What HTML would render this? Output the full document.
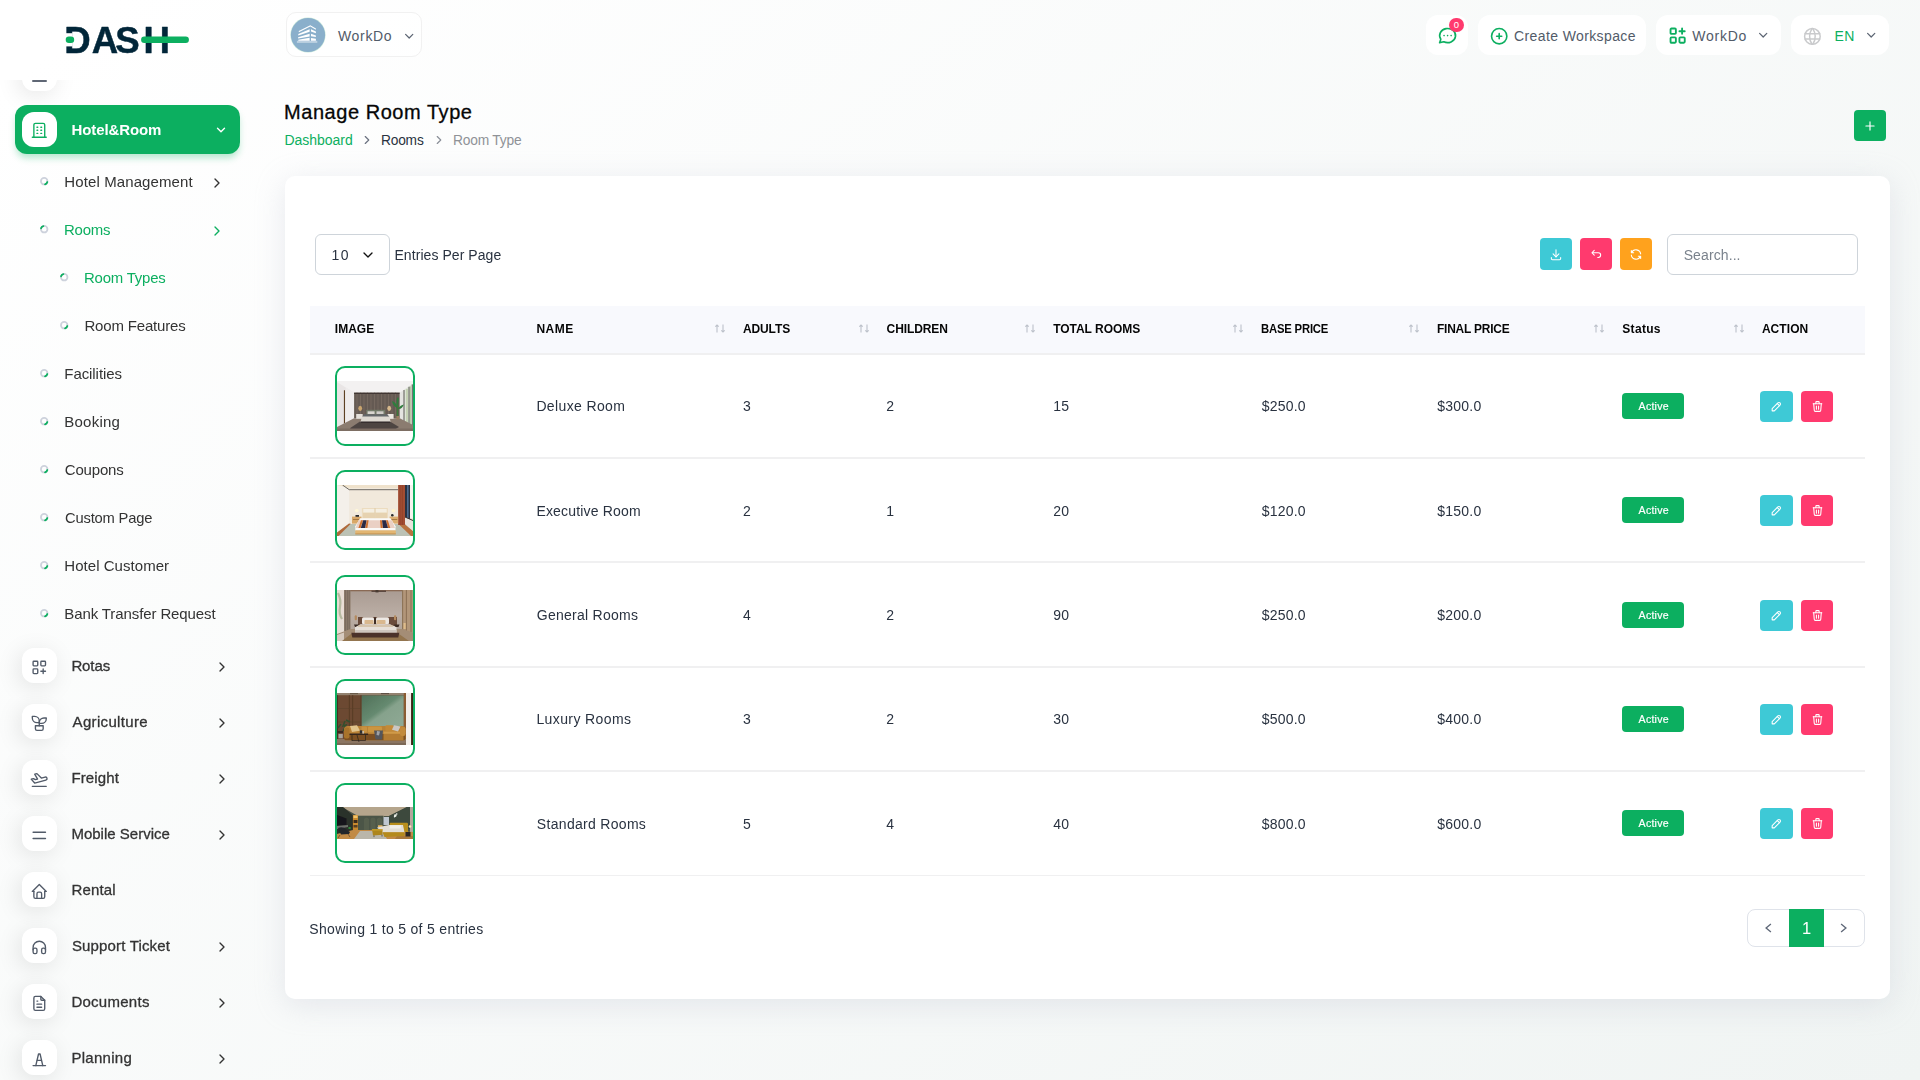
<!DOCTYPE html>
<html lang="en">
<head>
<meta charset="utf-8">
<title>Manage Room Type</title>
<style>
*{box-sizing:border-box;margin:0;padding:0}
html,body{width:1920px;height:1080px;overflow:hidden}
body{font-family:"Liberation Sans",sans-serif;font-size:14px;color:#293240;
background:linear-gradient(141.55deg,rgba(240,244,243,0) 3.46%,#f0f4f3 99.86%),#fff;position:relative}
.t{position:absolute;white-space:nowrap;display:block}
.abs{position:absolute}
a{text-decoration:none;color:inherit}
ul{list-style:none}
.micon{position:absolute;left:22px;width:35px;height:35px;border-radius:12px;background:#fff;
box-shadow:-3px 4px 23px rgba(0,0,0,.1);display:flex;align-items:center;justify-content:center;color:#525b69}
.med{-webkit-text-stroke:.3px currentColor}
.med2{-webkit-text-stroke:.18px currentColor}
.hbox{position:absolute;top:14.9px;height:40.4px;background:#fff;border-radius:12px}
.btn{position:absolute;border-radius:4px;display:flex;align-items:center;justify-content:center;color:#fff}
.card{position:absolute;left:285px;top:176px;width:1605px;height:822.5px;background:#fff;border-radius:10px;
box-shadow:0 6px 30px rgba(182,186,203,.3)}
.bullet{position:absolute;width:8.4px;height:8.4px;border-radius:50%;border:1.6px solid #c5cbd6}
</style>
</head>
<body>

<nav class="abs" style="left:0;top:0;width:280px;height:1080px;will-change:transform">
<a class="abs" style="left:60px;top:20px;width:136px;height:40px"><svg width="136" height="40" viewBox="60 20 136 40" style="position:absolute;left:0;top:0"><text y="52.9" x="64.300 91.700 115.300 143.600" font-family="Liberation Sans, sans-serif" font-weight="700" font-size="36.600" fill="#012639" stroke="#012639" stroke-width=".5" stroke-linejoin="round">DASH</text><rect x="63" y="33.200" width="9.600" height="13.200" fill="#fff"/><rect x="65.700" y="36.600" width="8.500" height="6.400" rx="3.200" fill="#0caf60"/><rect x="141.100" y="36.600" width="47.800" height="6.400" rx="3.200" fill="#0caf60"/></svg></a>
<div class="abs" style="left:0;top:80px;width:280px;height:60px;overflow:hidden"><div class="micon" style="top:-24.1px"></div><div class="abs" style="left:32px;top:0.4px;width:15px;height:1.5px;background:#5f6775;border-radius:1px"></div></div>
<ul>
<li><div class="abs" style="left:15px;top:105px;width:225px;height:49px;border-radius:12px;background:#0caf60;box-shadow:0 5px 7px -1px rgba(12,175,96,.3)"></div>
<span class="micon" style="top:112px;color:#0caf60;box-shadow:none"><svg width="18.6" height="18.6" viewBox="0 0 24 24" fill="none" stroke="currentColor" stroke-width="1.75" stroke-linecap="round" stroke-linejoin="round" style="transform:translateY(1px)"><path d="M3 21h18"/><path d="M5 21V5a2 2 0 0 1 2-2h10a2 2 0 0 1 2 2v16"/><path d="M9 8h1M9 12h1M9 16h1M14 8h1M14 12h1M14 16h1"/></svg></span>
<span class="t" style="left:71.62px;top:121px;font-size:15px;line-height:17px;color:#fff;letter-spacing:-0.128px;font-weight:700;">Hotel&amp;Room</span>
<svg width="14" height="14" viewBox="0 0 24 24" fill="none" stroke="#fff" stroke-width="2.4" stroke-linecap="round" stroke-linejoin="round" style="position:absolute;left:213.5px;top:122.5px;"><path d="M6 9l6 6 6-6"/></svg>
</li>
<li><svg class="abs" style="left:38.8px;top:175.8px" width="10.4" height="10.400" viewBox="-5.200 -5.200 10.400 10.400" fill="none" stroke-width="1.800"><circle r="3.250" stroke="#cdd2dc"/><circle r="3.250" stroke="#0caf60" stroke-dasharray="3.300 30" stroke-linecap="round" transform="rotate(15)"/></svg>
<span class="t" style="left:64.30px;top:173px;font-size:15px;line-height:17px;color:#333333;letter-spacing:0.108px;">Hotel Management</span>
<svg width="16" height="16" viewBox="0 0 24 24" fill="none" stroke="#333333" stroke-width="2" stroke-linecap="round" stroke-linejoin="round" style="position:absolute;left:209.0px;top:174.8px;"><path d="M9 18l6-6-6-6"/></svg>
</li>
<li><svg class="abs" style="left:38.8px;top:223.8px" width="10.4" height="10.400" viewBox="-5.200 -5.200 10.400 10.400" fill="none" stroke-width="1.800"><circle r="3.250" stroke="#cdd2dc"/><circle r="3.250" stroke="#0caf60" stroke-dasharray="3.300 30" stroke-linecap="round" transform="rotate(195)"/></svg>
<span class="t" style="left:64.30px;top:221px;font-size:15px;line-height:17px;color:#0caf60;letter-spacing:-0.200px;transform:scaleX(0.9972);transform-origin:0 0;">Rooms</span>
<svg width="16" height="16" viewBox="0 0 24 24" fill="none" stroke="#0caf60" stroke-width="2" stroke-linecap="round" stroke-linejoin="round" style="position:absolute;left:209.0px;top:222.8px;"><path d="M9 18l6-6-6-6"/></svg>
</li>
<li><svg class="abs" style="left:58.8px;top:271.8px" width="10.4" height="10.400" viewBox="-5.200 -5.200 10.400 10.400" fill="none" stroke-width="1.800"><circle r="3.250" stroke="#cdd2dc"/><circle r="3.250" stroke="#0caf60" stroke-dasharray="3.300 30" stroke-linecap="round" transform="rotate(195)"/></svg>
<span class="t" style="left:84.41px;top:269px;font-size:15px;line-height:17px;color:#0caf60;letter-spacing:-0.200px;transform:scaleX(0.9950);transform-origin:0 0;">Room Types</span>
</li>
<li><svg class="abs" style="left:58.8px;top:319.8px" width="10.4" height="10.400" viewBox="-5.200 -5.200 10.400 10.400" fill="none" stroke-width="1.800"><circle r="3.250" stroke="#cdd2dc"/><circle r="3.250" stroke="#0caf60" stroke-dasharray="3.300 30" stroke-linecap="round" transform="rotate(15)"/></svg>
<span class="t" style="left:84.40px;top:317px;font-size:15px;line-height:17px;color:#333333;letter-spacing:-0.169px;">Room Features</span>
</li>
<li><svg class="abs" style="left:38.8px;top:367.8px" width="10.4" height="10.400" viewBox="-5.200 -5.200 10.400 10.400" fill="none" stroke-width="1.800"><circle r="3.250" stroke="#cdd2dc"/><circle r="3.250" stroke="#0caf60" stroke-dasharray="3.300 30" stroke-linecap="round" transform="rotate(15)"/></svg>
<span class="t" style="left:64.30px;top:365px;font-size:15px;line-height:17px;color:#333333;letter-spacing:-0.069px;">Facilities</span>
</li>
<li><svg class="abs" style="left:38.8px;top:415.8px" width="10.4" height="10.400" viewBox="-5.200 -5.200 10.400 10.400" fill="none" stroke-width="1.800"><circle r="3.250" stroke="#cdd2dc"/><circle r="3.250" stroke="#0caf60" stroke-dasharray="3.300 30" stroke-linecap="round" transform="rotate(15)"/></svg>
<span class="t" style="left:64.30px;top:413px;font-size:15px;line-height:17px;color:#333333;letter-spacing:0.229px;">Booking</span>
</li>
<li><svg class="abs" style="left:38.8px;top:463.8px" width="10.4" height="10.400" viewBox="-5.200 -5.200 10.400 10.400" fill="none" stroke-width="1.800"><circle r="3.250" stroke="#cdd2dc"/><circle r="3.250" stroke="#0caf60" stroke-dasharray="3.300 30" stroke-linecap="round" transform="rotate(15)"/></svg>
<span class="t" style="left:64.75px;top:461px;font-size:15px;line-height:17px;color:#333333;letter-spacing:-0.167px;">Coupons</span>
</li>
<li><svg class="abs" style="left:38.8px;top:511.8px" width="10.4" height="10.400" viewBox="-5.200 -5.200 10.400 10.400" fill="none" stroke-width="1.800"><circle r="3.250" stroke="#cdd2dc"/><circle r="3.250" stroke="#0caf60" stroke-dasharray="3.300 30" stroke-linecap="round" transform="rotate(15)"/></svg>
<span class="t" style="left:64.76px;top:509px;font-size:15px;line-height:17px;color:#333333;letter-spacing:-0.200px;transform:scaleX(0.9834);transform-origin:0 0;">Custom Page</span>
</li>
<li><svg class="abs" style="left:38.8px;top:559.8px" width="10.4" height="10.400" viewBox="-5.200 -5.200 10.400 10.400" fill="none" stroke-width="1.800"><circle r="3.250" stroke="#cdd2dc"/><circle r="3.250" stroke="#0caf60" stroke-dasharray="3.300 30" stroke-linecap="round" transform="rotate(15)"/></svg>
<span class="t" style="left:64.30px;top:557px;font-size:15px;line-height:17px;color:#333333;letter-spacing:0.044px;">Hotel Customer</span>
</li>
<li><svg class="abs" style="left:38.8px;top:607.8px" width="10.4" height="10.400" viewBox="-5.200 -5.200 10.400 10.400" fill="none" stroke-width="1.800"><circle r="3.250" stroke="#cdd2dc"/><circle r="3.250" stroke="#0caf60" stroke-dasharray="3.300 30" stroke-linecap="round" transform="rotate(15)"/></svg>
<span class="t" style="left:64.30px;top:605px;font-size:15px;line-height:17px;color:#333333;letter-spacing:-0.104px;">Bank Transfer Request</span>
</li>
<li><span class="micon" style="top:648.3px"><svg width="18.6" height="18.6" viewBox="0 0 24 24" fill="none" stroke="currentColor" stroke-width="1.75" stroke-linecap="round" stroke-linejoin="round" style="transform:translateY(1.1px)"><rect x="4" y="4" width="6" height="6" rx="1"/><rect x="14" y="4" width="6" height="6" rx="1"/><rect x="4" y="14" width="6" height="6" rx="1"/><path d="M14 17h6m-3-3v6"/></svg></span>
<span class="t med" style="left:71.40px;top:657px;font-size:15px;line-height:17px;color:#333333;letter-spacing:-0.106px;">Rotas</span>
<svg width="16" height="16" viewBox="0 0 24 24" fill="none" stroke="#333333" stroke-width="2" stroke-linecap="round" stroke-linejoin="round" style="position:absolute;left:213.5px;top:659.0px;"><path d="M9 18l6-6-6-6"/></svg>
</li>
<li><span class="micon" style="top:704.3px"><svg width="18.6" height="18.6" viewBox="0 0 24 24" fill="none" stroke="currentColor" stroke-width="1.75" stroke-linecap="round" stroke-linejoin="round" style="transform:translateY(1.1px)"><path d="M7 15h10v4a2 2 0 0 1-2 2H9a2 2 0 0 1-2-2v-4z"/><path d="M12 9a6 6 0 0 0-6-6H3v2a6 6 0 0 0 6 6h3"/><path d="M12 11a6 6 0 0 1 6-6h3v1a6 6 0 0 1-6 6h-3"/><path d="M12 15V9"/></svg></span>
<span class="t med" style="left:72.60px;top:713px;font-size:15px;line-height:17px;color:#333333;letter-spacing:0.330px;">Agriculture</span>
<svg width="16" height="16" viewBox="0 0 24 24" fill="none" stroke="#333333" stroke-width="2" stroke-linecap="round" stroke-linejoin="round" style="position:absolute;left:213.5px;top:715.0px;"><path d="M9 18l6-6-6-6"/></svg>
</li>
<li><span class="micon" style="top:760.3px"><svg width="18.6" height="18.6" viewBox="0 0 24 24" fill="none" stroke="currentColor" stroke-width="1.75" stroke-linecap="round" stroke-linejoin="round" style="transform:translateY(1.1px)"><path d="M15 12h5a2 2 0 0 1 0 4H5l-3-6h3l2 2h3L8 5h3z" transform="rotate(-15 12 12) translate(0 -1)"/><path d="M3 21h18"/></svg></span>
<span class="t med" style="left:71.40px;top:769px;font-size:15px;line-height:17px;color:#333333;letter-spacing:0.158px;">Freight</span>
<svg width="16" height="16" viewBox="0 0 24 24" fill="none" stroke="#333333" stroke-width="2" stroke-linecap="round" stroke-linejoin="round" style="position:absolute;left:213.5px;top:771.0px;"><path d="M9 18l6-6-6-6"/></svg>
</li>
<li><span class="micon" style="top:816.3px"><svg width="18.6" height="18.6" viewBox="0 0 24 24" fill="none" stroke="currentColor" stroke-width="1.75" stroke-linecap="round" stroke-linejoin="round" style="transform:translateY(1.1px)"><path d="M4 8h16M4 16h16"/></svg></span>
<span class="t med" style="left:71.40px;top:825px;font-size:15px;line-height:17px;color:#333333;letter-spacing:0.013px;">Mobile Service</span>
<svg width="16" height="16" viewBox="0 0 24 24" fill="none" stroke="#333333" stroke-width="2" stroke-linecap="round" stroke-linejoin="round" style="position:absolute;left:213.5px;top:827.0px;"><path d="M9 18l6-6-6-6"/></svg>
</li>
<li><span class="micon" style="top:872.3px"><svg width="18.6" height="18.6" viewBox="0 0 24 24" fill="none" stroke="currentColor" stroke-width="1.75" stroke-linecap="round" stroke-linejoin="round" style="transform:translateY(1.1px)"><path d="M5 12H3l9-9 9 9h-2"/><path d="M5 12v7a2 2 0 0 0 2 2h10a2 2 0 0 0 2-2v-7"/><path d="M9 21v-6a2 2 0 0 1 2-2h2a2 2 0 0 1 2 2v6"/></svg></span>
<span class="t med" style="left:71.40px;top:881px;font-size:15px;line-height:17px;color:#333333;letter-spacing:0.190px;">Rental</span>
</li>
<li><span class="micon" style="top:928.3px"><svg width="18.6" height="18.6" viewBox="0 0 24 24" fill="none" stroke="currentColor" stroke-width="1.75" stroke-linecap="round" stroke-linejoin="round" style="transform:translateY(1.1px)"><rect x="4" y="13" rx="2" width="5" height="7"/><rect x="15" y="13" rx="2" width="5" height="7"/><path d="M4 15v-3a8 8 0 0 1 16 0v3"/></svg></span>
<span class="t med" style="left:71.92px;top:937px;font-size:15px;line-height:17px;color:#333333;letter-spacing:0.163px;">Support Ticket</span>
<svg width="16" height="16" viewBox="0 0 24 24" fill="none" stroke="#333333" stroke-width="2" stroke-linecap="round" stroke-linejoin="round" style="position:absolute;left:213.5px;top:939.0px;"><path d="M9 18l6-6-6-6"/></svg>
</li>
<li><span class="micon" style="top:984.3px"><svg width="18.6" height="18.6" viewBox="0 0 24 24" fill="none" stroke="currentColor" stroke-width="1.75" stroke-linecap="round" stroke-linejoin="round" style="transform:translateY(1.1px)"><path d="M14 3v4a1 1 0 0 0 1 1h4"/><path d="M17 21H7a2 2 0 0 1-2-2V5a2 2 0 0 1 2-2h7l5 5v11a2 2 0 0 1-2 2z"/><path d="M9 9h1M9 13h6M9 17h6"/></svg></span>
<span class="t med" style="left:71.40px;top:993px;font-size:15px;line-height:17px;color:#333333;letter-spacing:0.266px;">Documents</span>
<svg width="16" height="16" viewBox="0 0 24 24" fill="none" stroke="#333333" stroke-width="2" stroke-linecap="round" stroke-linejoin="round" style="position:absolute;left:213.5px;top:995.0px;"><path d="M9 18l6-6-6-6"/></svg>
</li>
<li><span class="micon" style="top:1040.3px"><svg width="18.6" height="18.6" viewBox="0 0 24 24" fill="none" stroke="currentColor" stroke-width="1.75" stroke-linecap="round" stroke-linejoin="round" style="transform:translateY(1.1px)"><path d="M4 20h16"/><path d="M9.300 13.200h5.400"/><path d="M7.500 20L11 5h2l3.500 15"/></svg></span>
<span class="t med" style="left:71.40px;top:1049px;font-size:15px;line-height:17px;color:#333333;letter-spacing:0.279px;">Planning</span>
<svg width="16" height="16" viewBox="0 0 24 24" fill="none" stroke="#333333" stroke-width="2" stroke-linecap="round" stroke-linejoin="round" style="position:absolute;left:213.5px;top:1051.0px;"><path d="M9 18l6-6-6-6"/></svg>
</li>
</ul></nav>
<header>
<div class="abs" style="left:285.5px;top:12.3px;width:136px;height:45.2px;border:1px solid #f1f1f1;border-radius:10px;background:rgba(255,255,255,.6)"></div>
<svg class="abs" style="left:290px;top:17px" width="36" height="36" viewBox="-0.900 -0.900 36 36"><circle cx="17.100" cy="17.100" r="17.600" fill="#cbeadb"/><circle cx="17.100" cy="17.100" r="17.100" fill="#8aafcb"/><g fill="#fff"><path d="M7.900 13.200L19.400 7.400 25 10.600V11.800L19.400 8.700 7.900 14.400z"/><path d="M7.400 16L18.750 11.300V13.900L7.400 17.500z"/><path d="M7.200 19.300L18.750 15.900V18.600L7.200 20.600z"/><path d="M7.400 21.800L18.750 19.900V22.900H7.400z"/><path d="M20.100 11.300L25 13.700V15.400L20.100 13.500z"/><path d="M20.100 15.900L25 17.500V19.200L20.100 18.300z"/><path d="M20.100 20L25 20.800V22.900H20.100z"/><rect x="6" y="22.900" width="20.400" height="2.100" opacity=".42"/></g></svg>
<span class="t" style="left:338.00px;top:28px;font-size:14px;line-height:16px;color:#525b69;letter-spacing:0.660px;">WorkDo</span>
<svg width="14.4" height="14.4" viewBox="0 0 24 24" fill="none" stroke="#5b6472" stroke-width="2" stroke-linecap="round" stroke-linejoin="round" style="position:absolute;left:401.7px;top:28.6px;"><path d="M6 9l6 6 6-6"/></svg>
<div class="hbox" style="left:1426px;width:42px"></div>
<svg width="21.2" height="21.2" viewBox="0 0 24 24" fill="none" stroke="#0caf60" stroke-width="1.85" stroke-linecap="round" stroke-linejoin="round" style="position:absolute;left:1436.7px;top:25.4px;"><path d="M3 20l1.3-3.9a9 8 0 1 1 3.4 2.9L3 20"/><path d="M12 12v.01M8 12v.01M16 12v.01"/></svg>
<div class="abs" style="left:1448.9px;top:17.8px;width:15.1px;height:14.1px;border-radius:8px;background:#ff3a6e"></div>
<span class="t" style="left:1453.67px;top:19px;font-size:9.5px;line-height:11px;color:#fff;">0</span>
<div class="hbox" style="left:1478px;width:168px"></div>
<svg width="20.4" height="20.4" viewBox="0 0 24 24" fill="none" stroke="#0caf60" stroke-width="1.9" stroke-linecap="round" stroke-linejoin="round" style="position:absolute;left:1489.1px;top:25.7px;"><circle cx="12" cy="12" r="9"/><path d="M9 12h6M12 9v6"/></svg>
<span class="t" style="left:1514.00px;top:28px;font-size:14px;line-height:16px;color:#525b69;letter-spacing:0.388px;">Create Workspace</span>
<div class="hbox" style="left:1656px;width:125px"></div>
<svg width="21.3" height="21.3" viewBox="0 0 24 24" fill="none" stroke="#0caf60" stroke-width="2.1" stroke-linecap="round" stroke-linejoin="round" style="position:absolute;left:1666.5px;top:25.25px;"><rect x="4" y="4" width="6" height="6" rx="1"/><rect x="4" y="14" width="6" height="6" rx="1"/><rect x="14" y="14" width="6" height="6" rx="1"/><path d="M14 7h6m-3-3v6"/></svg>
<span class="t" style="left:1692.20px;top:28px;font-size:14px;line-height:16px;color:#525b69;letter-spacing:0.760px;">WorkDo</span>
<svg width="14.4" height="14.4" viewBox="0 0 24 24" fill="none" stroke="#5b6472" stroke-width="2" stroke-linecap="round" stroke-linejoin="round" style="position:absolute;left:1755.9px;top:28.2px;"><path d="M6 9l6 6 6-6"/></svg>
<div class="hbox" style="left:1791px;width:98px"></div>
<svg width="20.8" height="20.8" viewBox="0 0 24 24" fill="none" stroke="#c9cacc" stroke-width="1.7" stroke-linecap="round" stroke-linejoin="round" style="position:absolute;left:1801.9px;top:25.5px;"><circle cx="12" cy="12" r="9"/><path d="M3.6 9h16.8M3.6 15h16.8"/><path d="M11.5 3a17 17 0 0 0 0 18"/><path d="M12.5 3a17 17 0 0 1 0 18"/></svg>
<span class="t" style="left:1834.48px;top:28px;font-size:14px;line-height:16px;color:#0caf60;letter-spacing:0.480px;">EN</span>
<svg width="14.4" height="14.4" viewBox="0 0 24 24" fill="none" stroke="#5b6472" stroke-width="2" stroke-linecap="round" stroke-linejoin="round" style="position:absolute;left:1863.8px;top:28.2px;"><path d="M6 9l6 6 6-6"/></svg>
</header>
<main>
<h4 class="t med" style="left:284.00px;top:101px;font-size:20px;line-height:22px;color:#060606;letter-spacing:0.547px;font-weight:400;">Manage Room Type</h4>
<span class="t" style="left:284.48px;top:132px;font-size:14px;line-height:16px;color:#0caf60;letter-spacing:-0.025px;">Dashboard</span>
<svg width="14" height="14" viewBox="0 0 24 24" fill="none" stroke="#6b7280" stroke-width="2" stroke-linecap="round" stroke-linejoin="round" style="position:absolute;left:359.8px;top:133.2px;"><path d="M9 18l6-6-6-6"/></svg>
<span class="t" style="left:381.40px;top:132px;font-size:14px;line-height:16px;color:#293240;letter-spacing:-0.200px;transform:scaleX(0.9817);transform-origin:0 0;">Rooms</span>
<svg width="14" height="14" viewBox="0 0 24 24" fill="none" stroke="#8a8f98" stroke-width="2" stroke-linecap="round" stroke-linejoin="round" style="position:absolute;left:431.9px;top:133.2px;"><path d="M9 18l6-6-6-6"/></svg>
<span class="t" style="left:453.40px;top:132px;font-size:14px;line-height:16px;color:#8f9297;letter-spacing:-0.200px;transform:scaleX(0.9846);transform-origin:0 0;">Room Type</span>
<a class="btn" style="left:1854px;top:110px;width:32px;height:31px;background:#0caf60"><svg width="14" height="14" viewBox="0 0 24 24" fill="none" stroke="currentColor" stroke-width="2" stroke-linecap="round" stroke-linejoin="round" style=""><path d="M12 5v14M5 12h14"/></svg></a>
<section class="card"></section>
<div class="abs" style="left:315px;top:234px;width:74.5px;height:41px;border:1px solid #ced4da;border-radius:6px"></div>
<span class="t" style="left:331.55px;top:247px;font-size:14px;line-height:16px;color:#293240;letter-spacing:1.300px;">10</span>
<svg width="16" height="16" viewBox="0 0 24 24" fill="none" stroke="#111" stroke-width="2" stroke-linecap="round" stroke-linejoin="round" style="position:absolute;left:360px;top:246.7px;"><path d="M6 9l6 6 6-6"/></svg>
<span class="t" style="left:394.48px;top:247px;font-size:14px;line-height:16px;color:#293240;letter-spacing:0.063px;">Entries Per Page</span>
<a class="btn" style="left:1540px;top:238px;width:32px;height:32px;background:#3ec9d6"><svg width="14" height="14" viewBox="0 0 24 24" fill="none" stroke="currentColor" stroke-width="1.8" stroke-linecap="round" stroke-linejoin="round" style="transform:translateY(.5px)"><path d="M4 17v2a2 2 0 0 0 2 2h12a2 2 0 0 0 2-2v-2"/><path d="M7 11l5 5 5-5"/><path d="M12 4v12"/></svg></a>
<a class="btn" style="left:1580px;top:238px;width:32px;height:32px;background:#ff3a6e"><svg width="14" height="14" viewBox="0 0 24 24" fill="none" stroke="currentColor" stroke-width="1.8" stroke-linecap="round" stroke-linejoin="round" style="transform:translateY(.5px)"><path d="M9 13L5 9l4-4M5 9h11a4 4 0 0 1 0 8h-1"/></svg></a>
<a class="btn" style="left:1620px;top:238px;width:32px;height:32px;background:#ffa21d"><svg width="14" height="14" viewBox="0 0 24 24" fill="none" stroke="currentColor" stroke-width="1.8" stroke-linecap="round" stroke-linejoin="round" style="transform:translateY(.5px)"><path d="M20 11A8.1 8.1 0 0 0 4.500 9M4 5v4h4"/><path d="M4 13a8.1 8.1 0 0 0 15.500 2m.5 4v-4h-4"/></svg></a>
<div class="abs" style="left:1667px;top:234px;width:191px;height:41px;border:1px solid #ced4da;border-radius:6px"></div>
<span class="t" style="left:1683.67px;top:247px;font-size:14px;line-height:16px;color:#7a828c;letter-spacing:0.103px;">Search...</span>
<div class="abs" style="left:310px;top:306px;width:1554.5px;height:47px;background:#f8f9fd"></div>
<div class="abs" style="left:310px;top:353px;width:1554.5px;height:2px;background:#f0f0f1"></div>
<div class="abs" style="left:310px;top:457px;width:1554.5px;height:2px;background:#f0f0f1"></div>
<div class="abs" style="left:310px;top:561px;width:1554.5px;height:2px;background:#f0f0f1"></div>
<div class="abs" style="left:310px;top:666px;width:1554.5px;height:2px;background:#f0f0f1"></div>
<div class="abs" style="left:310px;top:770px;width:1554.5px;height:2px;background:#f0f0f1"></div>
<div class="abs" style="left:310px;top:875px;width:1554.5px;height:1px;background:#f0f0f1"></div>
<span class="t" style="left:334.82px;top:322px;font-size:12px;line-height:14px;color:#060606;font-weight:700;">IMAGE</span>
<span class="t" style="left:536.52px;top:322px;font-size:12px;line-height:14px;color:#060606;letter-spacing:0.440px;font-weight:700;">NAME</span>
<span class="t" style="left:743.00px;top:322px;font-size:12px;line-height:14px;color:#060606;letter-spacing:-0.128px;font-weight:700;">ADULTS</span>
<span class="t" style="left:886.62px;top:322px;font-size:12px;line-height:14px;color:#060606;letter-spacing:-0.103px;font-weight:700;">CHILDREN</span>
<span class="t" style="left:1053.18px;top:322px;font-size:12px;line-height:14px;color:#060606;letter-spacing:-0.026px;font-weight:700;">TOTAL ROOMS</span>
<span class="t" style="left:1261.17px;top:322px;font-size:12px;line-height:14px;color:#060606;letter-spacing:-0.200px;transform:scaleX(0.9414);transform-origin:0 0;font-weight:700;">BASE PRICE</span>
<span class="t" style="left:1436.72px;top:322px;font-size:12px;line-height:14px;color:#060606;letter-spacing:-0.200px;transform:scaleX(0.9942);transform-origin:0 0;font-weight:700;">FINAL PRICE</span>
<span class="t" style="left:1622.30px;top:322px;font-size:12px;line-height:14px;color:#060606;letter-spacing:0.312px;font-weight:700;">Status</span>
<span class="t" style="left:1761.90px;top:322px;font-size:12px;line-height:14px;color:#060606;letter-spacing:0.064px;font-weight:700;">ACTION</span>
<svg class="abs" style="left:714.6px;top:324px" width="10" height="9" viewBox="0 0 10 9" fill="none" stroke="#bcc1ca" stroke-width="1.1"><path d="M2 8.500V1M.3 2.700L2 1l1.700 1.700M8 .500V8M6.300 6.300L8 8l1.700-1.700"/></svg>
<svg class="abs" style="left:858.6px;top:324px" width="10" height="9" viewBox="0 0 10 9" fill="none" stroke="#bcc1ca" stroke-width="1.1"><path d="M2 8.500V1M.3 2.700L2 1l1.700 1.700M8 .500V8M6.300 6.300L8 8l1.700-1.700"/></svg>
<svg class="abs" style="left:1024.7px;top:324px" width="10" height="9" viewBox="0 0 10 9" fill="none" stroke="#bcc1ca" stroke-width="1.1"><path d="M2 8.500V1M.3 2.700L2 1l1.700 1.700M8 .500V8M6.300 6.300L8 8l1.700-1.700"/></svg>
<svg class="abs" style="left:1232.8px;top:324px" width="10" height="9" viewBox="0 0 10 9" fill="none" stroke="#bcc1ca" stroke-width="1.1"><path d="M2 8.500V1M.3 2.700L2 1l1.700 1.700M8 .500V8M6.300 6.300L8 8l1.700-1.700"/></svg>
<svg class="abs" style="left:1408.6px;top:324px" width="10" height="9" viewBox="0 0 10 9" fill="none" stroke="#bcc1ca" stroke-width="1.1"><path d="M2 8.500V1M.3 2.700L2 1l1.700 1.700M8 .500V8M6.300 6.300L8 8l1.700-1.700"/></svg>
<svg class="abs" style="left:1593.7px;top:324px" width="10" height="9" viewBox="0 0 10 9" fill="none" stroke="#bcc1ca" stroke-width="1.1"><path d="M2 8.500V1M.3 2.700L2 1l1.700 1.700M8 .500V8M6.300 6.300L8 8l1.700-1.700"/></svg>
<svg class="abs" style="left:1733.8px;top:324px" width="10" height="9" viewBox="0 0 10 9" fill="none" stroke="#bcc1ca" stroke-width="1.1"><path d="M2 8.500V1M.3 2.700L2 1l1.700 1.700M8 .500V8M6.300 6.300L8 8l1.700-1.700"/></svg>
<div class="abs" style="left:335px;top:366px;width:80px;height:80px;border:2px solid #0caf60;border-radius:10px;background:#fff;overflow:hidden"><div class="abs" style="left:0;top:13.0px;width:76px;height:50px;line-height:0"><svg width="76" height="50" viewBox="0 0 76 50"><filter id="pb1" filterUnits="userSpaceOnUse" x="0" y="0" width="76" height="50"><feGaussianBlur stdDeviation=".4" edgeMode="duplicate"/></filter><g filter="url(#pb1)"><rect width="76" height="50" fill="#f3f1f1"/><path d="M0 1L17.100 11.700V37.300L0 46z" fill="#e9e5e5"/><path d="M8.800 6.500l8.300 5.200v25.600l-8.300 4.200z" fill="#efecec"/><path d="M6.900 9.200h1.100v33l-1.100.6z" fill="#5d4023"/><rect x="17.100" y="11.700" width="45.700" height="25.600" fill="#655a52"/><path d="M20 11.700v25.600M23.500 11.700v25.600M27 11.700v25.600M30.500 11.700v25.600M34 11.700v25.600M37.500 11.700v25.600M41 11.700v25.600M44.500 11.700v25.600M48 11.700v25.600M51.500 11.700v25.600M55 11.700v25.600M58.500 11.700v25.600" stroke="#786c63" stroke-width=".8"/><rect x="17.100" y="11.700" width="45.700" height="1.300" fill="#3f3632"/><path d="M62.800 11.700L76 2.500V44L62.800 37.300z" fill="#e4e4e1"/><path d="M67 9v31.500l9 4.500V3z" fill="#dde3d6"/><path d="M70 8v34M73.300 5.500v38" stroke="#b7c9a3" stroke-width="1.300"/><path d="M67 9v31.500M72 5.800v37.200M75.300 3.400v41.200" stroke="#4c4a48" stroke-width=".9"/><path d="M0 46l17.100-8.700h45.700L76 44v6H0z" fill="#8b7b70"/><path d="M14 46.500l9-6h30l9 5.500-5 3H12z" fill="#3f3838" opacity=".8"/><path d="M0 48.500h76V50H0z" fill="#5f5149" opacity=".6"/><path d="M0 47.500h76V50H0z" fill="#7d6e64"/><path d="M60.500 37V22" stroke="#3c7a3a" stroke-width="1.400"/><path d="M60.500 27c-3-1-5-4-5.500-7 3 1 5 3 5.500 7zM60.700 25c.5-4 2-7 .3-9-2 2-2 6-.3 9zM60.800 28c2-3 4-4 6-4.500-1 3-3 5-6 4.500z" fill="#2f7d3c"/><rect x="59.300" y="35" width="3" height="3.500" fill="#9b7f63"/><ellipse cx="23.200" cy="27.300" rx="1.900" ry="2.600" fill="#c9a46e"/><ellipse cx="52.200" cy="27.300" rx="1.900" ry="2.600" fill="#d8b98c"/><rect x="19.200" y="33" width="6.500" height="4.800" fill="#e4dfd9"/><rect x="50.100" y="33" width="6.500" height="4.800" fill="#eee9e3"/><rect x="29.300" y="28.800" width="18.800" height="5" rx=".8" fill="#727a68"/><rect x="30.600" y="30.300" width="7" height="2.700" fill="#d9d6d0"/><rect x="39.500" y="30.300" width="7" height="2.700" fill="#cfccc8"/><path d="M27 33.200h23.500l2 3H25z" fill="#64676a"/><path d="M25 35.600h27.500l1 5.200H23.600z" fill="#ddd9d1"/><path d="M24 40.600h29v1.200H24z" fill="#2f2a2a"/></g></svg></div></div>
<span class="t" style="left:536.38px;top:398px;font-size:14px;line-height:16px;color:#293240;letter-spacing:0.369px;">Deluxe Room</span>
<span class="t" style="left:743.00px;top:398px;font-size:14px;line-height:16px;color:#293240;">3</span>
<span class="t" style="left:886.20px;top:398px;font-size:14px;line-height:16px;color:#293240;">2</span>
<span class="t" style="left:1053.20px;top:398px;font-size:14px;line-height:16px;color:#293240;letter-spacing:.2px;">15</span>
<span class="t" style="left:1261.76px;top:398px;font-size:14px;line-height:16px;color:#293240;letter-spacing:0.198px;">$250.0</span>
<span class="t" style="left:1437.36px;top:398px;font-size:14px;line-height:16px;color:#293240;letter-spacing:0.198px;">$300.0</span>
<div class="abs" style="left:1622px;top:393px;width:62.2px;height:26px;border-radius:4px;background:#0caf60"></div>
<span class="t med2" style="left:1638.60px;top:400px;font-size:10.6px;line-height:12px;color:#fff;letter-spacing:0.238px;">Active</span>
<a class="btn" style="left:1760px;top:391px;width:33px;height:31px;background:#3ec9d6"><svg width="13" height="13" viewBox="0 0 24 24" fill="none" stroke="currentColor" stroke-width="2" stroke-linecap="round" stroke-linejoin="round" style=""><path d="M4 20h4L18.500 9.500a1.500 1.500 0 0 0-4-4L4 16v4"/><path d="M13.500 6.500l4 4"/></svg></a>
<a class="btn" style="left:1801px;top:391px;width:32px;height:31px;background:#ff3a6e"><svg width="13" height="13" viewBox="0 0 24 24" fill="none" stroke="currentColor" stroke-width="2" stroke-linecap="round" stroke-linejoin="round" style=""><path d="M4 7h16M10 11v6M14 11v6"/><path d="M5 7l1 12a2 2 0 0 0 2 2h8a2 2 0 0 0 2-2l1-12"/><path d="M9 7V4a1 1 0 0 1 1-1h4a1 1 0 0 1 1 1v3"/></svg></a>
<div class="abs" style="left:335px;top:470px;width:80px;height:80px;border:2px solid #0caf60;border-radius:10px;background:#fff;overflow:hidden"><div class="abs" style="left:0;top:12.5px;width:76px;height:51px;line-height:0"><svg width="76" height="51" viewBox="0 0 76 51"><filter id="pb2" filterUnits="userSpaceOnUse" x="0" y="0" width="76" height="51"><feGaussianBlur stdDeviation=".4" edgeMode="duplicate"/></filter><g filter="url(#pb2)"><rect width="76" height="51" fill="#f1e9dc"/><path d="M0 0h6l6.200 4.500V39L0 48z" fill="#f4f0ea"/><path d="M0 0h61v3H12.200z" fill="#efe2cc"/><path d="M5.500 0l6.700 4.700H61" stroke="#4a4744" stroke-width=".8" fill="none"/><path d="M0 48l12.200-9H70l6 5v7H0z" fill="#bcc2b5"/><path d="M0 47.500l12-9 1.800.3L1.500 51H0z" fill="#b06a3a"/><path d="M62 39.500h6l8 6.500v5h-2z" fill="#b8733f"/><rect x="61.100" y="0" width="7" height="40" fill="#a34e33"/><path d="M63 0v40M65.300 0v40" stroke="#8e3f28" stroke-width=".8"/><rect x="68" y="0" width="5" height="34" fill="#2b3343"/><rect x="70" y="0" width="1.600" height="33" fill="#4b6a8f"/><rect x="73" y="0" width="3" height="33" fill="#f6f3ee"/><path d="M68 32l8 3.500v10.500l-8-7z" fill="#e9e4dd"/><path d="M68 32l8 3.500" stroke="#3a2d2a" stroke-width="1"/><rect x="15" y="31.600" width="9.500" height="7" fill="#d9a868"/><rect x="16" y="34" width="7.500" height="1" fill="#a97a42"/><rect x="52.600" y="31.600" width="8.500" height="7" fill="#dcae70"/><rect x="53.500" y="34" width="6.800" height="1" fill="#a97a42"/><rect x="18.500" y="30" width="3.500" height="1.800" fill="#2c2c2c"/><circle cx="55.300" cy="30.300" r="1.300" fill="#2c2c2c"/><ellipse cx="19.800" cy="25.600" rx="1.900" ry="1.600" fill="#fff7d6"/><ellipse cx="56.400" cy="25.600" rx="1.900" ry="1.600" fill="#fff2c9"/><rect x="24.900" y="23" width="26" height="11" rx=".6" fill="#ecdcbf"/><path d="M38 23v11" stroke="#d2bd98" stroke-width=".5"/><rect x="26.300" y="24" width="11" height="3.400" fill="#f5efe2"/><rect x="38.700" y="24" width="11" height="3.400" fill="#f5efe2"/><rect x="26" y="28" width="11.700" height="5.400" fill="#e6d2b0"/><rect x="38.400" y="28" width="11.700" height="5.400" fill="#e6d2b0"/><path d="M23 33.300h30.500l5 8v4.500H18.300v-4.500z" fill="#faf9f7"/><path d="M21.500 35.300h33.500l3 7.700H18.600z" fill="#ead0c4"/><path d="M24 35.300h2l-2.400 7.700h-2.200zM29.800 35.300h1.800l-1.200 7.700h-2.100zM43 35.300h1.800l1 7.700h-2.100zM49 35.300h1.800l2.500 7.700h-2.200z" fill="#cf6f2e"/><path d="M26.200 35.300h3.300l-1.400 7.700h-4.300zM45 35.300h3.800l2.200 7.700h-5z" fill="#2b2a45"/><rect x="18.300" y="45.300" width="40.500" height="3.700" fill="#e2b672"/><rect x="18.300" y="48.500" width="40.500" height=".9" fill="#b98a4a"/></g></svg></div></div>
<span class="t" style="left:536.38px;top:503px;font-size:14px;line-height:16px;color:#293240;letter-spacing:0.172px;">Executive Room</span>
<span class="t" style="left:743.00px;top:503px;font-size:14px;line-height:16px;color:#293240;">2</span>
<span class="t" style="left:886.20px;top:503px;font-size:14px;line-height:16px;color:#293240;">1</span>
<span class="t" style="left:1053.20px;top:503px;font-size:14px;line-height:16px;color:#293240;letter-spacing:.2px;">20</span>
<span class="t" style="left:1261.76px;top:503px;font-size:14px;line-height:16px;color:#293240;letter-spacing:0.198px;">$120.0</span>
<span class="t" style="left:1437.36px;top:503px;font-size:14px;line-height:16px;color:#293240;letter-spacing:0.198px;">$150.0</span>
<div class="abs" style="left:1622px;top:497px;width:62.2px;height:26px;border-radius:4px;background:#0caf60"></div>
<span class="t med2" style="left:1638.60px;top:504px;font-size:10.6px;line-height:12px;color:#fff;letter-spacing:0.238px;">Active</span>
<a class="btn" style="left:1760px;top:495px;width:33px;height:31px;background:#3ec9d6"><svg width="13" height="13" viewBox="0 0 24 24" fill="none" stroke="currentColor" stroke-width="2" stroke-linecap="round" stroke-linejoin="round" style=""><path d="M4 20h4L18.500 9.500a1.500 1.500 0 0 0-4-4L4 16v4"/><path d="M13.500 6.500l4 4"/></svg></a>
<a class="btn" style="left:1801px;top:495px;width:32px;height:31px;background:#ff3a6e"><svg width="13" height="13" viewBox="0 0 24 24" fill="none" stroke="currentColor" stroke-width="2" stroke-linecap="round" stroke-linejoin="round" style=""><path d="M4 7h16M10 11v6M14 11v6"/><path d="M5 7l1 12a2 2 0 0 0 2 2h8a2 2 0 0 0 2-2l1-12"/><path d="M9 7V4a1 1 0 0 1 1-1h4a1 1 0 0 1 1 1v3"/></svg></a>
<div class="abs" style="left:335px;top:575px;width:80px;height:80px;border:2px solid #0caf60;border-radius:10px;background:#fff;overflow:hidden"><div class="abs" style="left:0;top:12.5px;width:76px;height:51px;line-height:0"><svg width="76" height="51" viewBox="0 0 76 51"><filter id="pb3" filterUnits="userSpaceOnUse" x="0" y="0" width="76" height="51"><feGaussianBlur stdDeviation=".4" edgeMode="duplicate"/></filter><g filter="url(#pb3)"><defs><linearGradient id="r3w" x1="0" y1="0" x2="0" y2="1"><stop offset="0" stop-color="#a99b92"/><stop offset=".5" stop-color="#bbaea5"/><stop offset="1" stop-color="#ab9c91"/></linearGradient></defs><rect width="76" height="51" fill="url(#r3w)"/><rect width="76" height="1.300" fill="#8a6a55"/><rect x="0" y="0" width="7" height="44" fill="#e9ded5"/><path d="M1 3c2 4 3 9 2 14s0 9 2 12" stroke="#a9b092" stroke-width="2.200" fill="none" opacity=".8"/><rect x="7" y="0" width="6.500" height="41" fill="#8b7a69"/><path d="M8.500 0v41M10.500 0v41M12.300 0v41" stroke="#75655a" stroke-width=".7"/><rect x="65" y="0" width="11" height="42" fill="#b29679"/><path d="M65.600 0v41M69.400 0v42M74 0v42" stroke="#8d7258" stroke-width="1.100"/><rect x="66.500" y="33" width="2.200" height="6" fill="#e9c48e" opacity=".8"/><path d="M0 44l13.500-5H65l11 3.500V51H0z" fill="#a48d76"/><path d="M0 45l7-2.500V51H0z" fill="#d8cbc0"/><path d="M5 51l9-7h48l10 7z" fill="#93744f"/><path d="M34.500 1.200h14.500" stroke="#4a3a32" stroke-width="1.200"/><rect x="38.500" y="0" width="3" height="2.400" fill="#4a3a32"/><rect x="21" y="27" width="39" height="9" fill="#6b4b3a"/><rect x="17.700" y="25.200" width="2.200" height="5" rx="1" fill="#b48a5f"/><rect x="57" y="25.200" width="2.200" height="5" rx="1" fill="#b48a5f"/><path d="M17 34.500h5.500l-1 2.500h-3.500z" fill="#3b2a24"/><path d="M57 34.500h5.500l-1 2.500H58z" fill="#3b2a24"/><rect x="25" y="27.200" width="12" height="7" rx="1.500" fill="#f0ebe6"/><rect x="39" y="27.200" width="13" height="7" rx="1.500" fill="#ede8e3"/><rect x="27.500" y="30" width="9" height="4.600" rx=".8" fill="#d9b88f"/><rect x="39.500" y="30" width="9" height="4.600" rx=".8" fill="#d9b88f"/><rect x="37.300" y="27.500" width="1.400" height="7" fill="#2d211d"/><path d="M23.500 34.300h29.500l6.500 3v6H18v-6z" fill="#e6dfd8"/><path d="M22 35.400h33l1.500 1H20.500z" fill="#c6a982"/><path d="M18 40h41.500v3H18z" fill="#cfc6be"/><path d="M14.300 42.800h48l-1 4.600H15.300z" fill="#4b3329"/></g></svg></div></div>
<span class="t" style="left:536.80px;top:607px;font-size:14px;line-height:16px;color:#293240;letter-spacing:0.260px;">General Rooms</span>
<span class="t" style="left:743.00px;top:607px;font-size:14px;line-height:16px;color:#293240;">4</span>
<span class="t" style="left:886.20px;top:607px;font-size:14px;line-height:16px;color:#293240;">2</span>
<span class="t" style="left:1053.20px;top:607px;font-size:14px;line-height:16px;color:#293240;letter-spacing:.2px;">90</span>
<span class="t" style="left:1261.76px;top:607px;font-size:14px;line-height:16px;color:#293240;letter-spacing:0.198px;">$250.0</span>
<span class="t" style="left:1437.36px;top:607px;font-size:14px;line-height:16px;color:#293240;letter-spacing:0.198px;">$200.0</span>
<div class="abs" style="left:1622px;top:602px;width:62.2px;height:26px;border-radius:4px;background:#0caf60"></div>
<span class="t med2" style="left:1638.60px;top:609px;font-size:10.6px;line-height:12px;color:#fff;letter-spacing:0.238px;">Active</span>
<a class="btn" style="left:1760px;top:600px;width:33px;height:31px;background:#3ec9d6"><svg width="13" height="13" viewBox="0 0 24 24" fill="none" stroke="currentColor" stroke-width="2" stroke-linecap="round" stroke-linejoin="round" style=""><path d="M4 20h4L18.500 9.500a1.500 1.500 0 0 0-4-4L4 16v4"/><path d="M13.500 6.500l4 4"/></svg></a>
<a class="btn" style="left:1801px;top:600px;width:32px;height:31px;background:#ff3a6e"><svg width="13" height="13" viewBox="0 0 24 24" fill="none" stroke="currentColor" stroke-width="2" stroke-linecap="round" stroke-linejoin="round" style=""><path d="M4 7h16M10 11v6M14 11v6"/><path d="M5 7l1 12a2 2 0 0 0 2 2h8a2 2 0 0 0 2-2l1-12"/><path d="M9 7V4a1 1 0 0 1 1-1h4a1 1 0 0 1 1 1v3"/></svg></a>
<div class="abs" style="left:335px;top:679px;width:80px;height:80px;border:2px solid #0caf60;border-radius:10px;background:#fff;overflow:hidden"><div class="abs" style="left:0;top:12.0px;width:76px;height:52px;line-height:0"><svg width="76" height="52" viewBox="0 0 76 52"><filter id="pb4" filterUnits="userSpaceOnUse" x="0" y="0" width="76" height="52"><feGaussianBlur stdDeviation=".4" edgeMode="duplicate"/></filter><g filter="url(#pb4)"><defs><linearGradient id="r4g" x1="0" y1="0" x2="1" y2="1"><stop offset="0" stop-color="#4f7059"/><stop offset=".45" stop-color="#668a70"/><stop offset=".55" stop-color="#86a28c"/><stop offset="1" stop-color="#8fa995"/></linearGradient></defs><rect width="76" height="52" fill="#6c4a32"/><rect width="76" height="2.200" fill="#93826f"/><rect x="13" y=".3" width="8" height=".8" fill="#5a4a3e"/><rect x="44" y=".3" width="8" height=".8" fill="#4a3c33"/><path d="M12.300 2.200V45M15.700 2.200V45M24 2.200V45" stroke="#573a26" stroke-width="1"/><path d="M0 15.500h24.700M0 29h24.700" stroke="#5d3f2a" stroke-width=".6"/><rect x="0" y="2.200" width="1" height="44" fill="#4a2f20"/><rect x="24.700" y="2.400" width="42.100" height="31" fill="url(#r4g)"/><rect x="66.800" y="0" width="2.400" height="46" fill="#8b5c33"/><rect x="69" y="0" width="5.200" height="52" fill="#f3eeea"/><rect x="74.200" y="0" width="1.800" height="52" fill="#3a2418"/><rect x="0" y="46" width="69" height="6" fill="#8b7462"/><rect x="0" y="50" width="69" height="2" fill="#7c6757"/><path d="M8 28l-2 5 3-1-3 6M4 31l-3 4M9 27l4 2" stroke="#33502f" stroke-width="1.500" fill="none"/><rect x="0" y="38" width="6" height="2" fill="#3a2a20"/><rect x="1.500" y="41" width="4.300" height="4.300" fill="#a9a49d"/><path d="M7 36c0-2 2-3 4-3h54c2 0 3.500 1 3.500 3v9c0 1.500-1 2.300-2.500 2.300H9.500C8 47.300 7 46.500 7 45z" fill="#b98236"/><path d="M7 41h61.500v4c0 1.500-1 2.300-2.500 2.300H9.500C8 47.300 7 46.500 7 45z" fill="#7c5020"/><rect x="24.500" y="33.600" width="5.500" height="6" rx="1" fill="#c99240"/><rect x="31" y="33.400" width="14" height="6" rx="1" fill="#cc953f"/><rect x="48.500" y="32.300" width="8" height="6" rx="1" fill="#c38a39"/><path d="M46.500 38.500h20v8.800h-20z" fill="#b47c30"/><path d="M46.500 38.500h20v2.300h-20z" fill="#d09a48"/><rect x="63" y="34" width="5.500" height="9" rx="2" fill="#c28a3a"/><rect x="7" y="34.500" width="5.500" height="11" rx="2" fill="#a8732c"/><path d="M13 33l7-.8 3 5.500-8 1.300z" fill="#e2c48c"/><path d="M57 32.300l6.500 1.200-2.500 5-6-1.700z" fill="#cbc7c3"/><path d="M37 37.500h9l-1 9h-6.500z" fill="#55565c"/><path d="M40 38l3 .5-1 4-2.500-.5z" fill="#9fa1a6"/><rect x="12.600" y="40.500" width="18.500" height="1.500" fill="#35251c"/><path d="M15 42v6M28.500 42v5.500M15 47.500h13.500M20 42l2 7" stroke="#2b2320" stroke-width=".7"/><rect x="22.800" y="37.300" width="2.500" height="3.300" fill="#2f2f33"/><rect x="25.500" y="38" width="1.300" height="2.600" fill="#c9c9c9"/></g></svg></div></div>
<span class="t" style="left:536.38px;top:711px;font-size:14px;line-height:16px;color:#293240;letter-spacing:0.398px;">Luxury Rooms</span>
<span class="t" style="left:743.00px;top:711px;font-size:14px;line-height:16px;color:#293240;">3</span>
<span class="t" style="left:886.20px;top:711px;font-size:14px;line-height:16px;color:#293240;">2</span>
<span class="t" style="left:1053.20px;top:711px;font-size:14px;line-height:16px;color:#293240;letter-spacing:.2px;">30</span>
<span class="t" style="left:1261.76px;top:711px;font-size:14px;line-height:16px;color:#293240;letter-spacing:0.198px;">$500.0</span>
<span class="t" style="left:1437.36px;top:711px;font-size:14px;line-height:16px;color:#293240;letter-spacing:0.198px;">$400.0</span>
<div class="abs" style="left:1622px;top:706px;width:62.2px;height:26px;border-radius:4px;background:#0caf60"></div>
<span class="t med2" style="left:1638.60px;top:713px;font-size:10.6px;line-height:12px;color:#fff;letter-spacing:0.238px;">Active</span>
<a class="btn" style="left:1760px;top:704px;width:33px;height:31px;background:#3ec9d6"><svg width="13" height="13" viewBox="0 0 24 24" fill="none" stroke="currentColor" stroke-width="2" stroke-linecap="round" stroke-linejoin="round" style=""><path d="M4 20h4L18.500 9.500a1.500 1.500 0 0 0-4-4L4 16v4"/><path d="M13.500 6.500l4 4"/></svg></a>
<a class="btn" style="left:1801px;top:704px;width:32px;height:31px;background:#ff3a6e"><svg width="13" height="13" viewBox="0 0 24 24" fill="none" stroke="currentColor" stroke-width="2" stroke-linecap="round" stroke-linejoin="round" style=""><path d="M4 7h16M10 11v6M14 11v6"/><path d="M5 7l1 12a2 2 0 0 0 2 2h8a2 2 0 0 0 2-2l1-12"/><path d="M9 7V4a1 1 0 0 1 1-1h4a1 1 0 0 1 1 1v3"/></svg></a>
<div class="abs" style="left:335px;top:783px;width:80px;height:80px;border:2px solid #0caf60;border-radius:10px;background:#fff;overflow:hidden"><div class="abs" style="left:0;top:22.0px;width:76px;height:32px;line-height:0"><svg width="76" height="32" viewBox="0 0 76 32"><filter id="pb5" filterUnits="userSpaceOnUse" x="0" y="0" width="76" height="32"><feGaussianBlur stdDeviation=".4" edgeMode="duplicate"/></filter><g filter="url(#pb5)"><rect width="76" height="32" fill="#4b5346"/><path d="M5 0h65L52 9H21z" fill="#b5a58c"/><path d="M21 9h26v1.200H21z" fill="#c9b892" opacity=".7"/><path d="M0 0h6l10 8.500v15L0 27z" fill="#2c3029"/><path d="M0 8l9.500 3.500v6.500L0 18.500z" fill="#15171a"/><path d="M0 19l11-1v2l-11 2z" fill="#6d6f6c"/><rect x="15.900" y="8" width="5.100" height="15.500" fill="#c98a2e"/><rect x="16.500" y="8.500" width="4" height="2.500" fill="#f1c36a"/><rect x="16.500" y="13" width="4" height="3" fill="#3a2c1c"/><rect x="16.500" y="18" width="4" height="2.500" fill="#5a3f20"/><rect x="21" y="8.700" width="25.500" height="15" fill="#4c5446"/><path d="M27 12c1.500-2 3.500-2 5 0v11h-5zM33.500 12c1.500-2 3.500-2 5 0v11h-5zM40 12c1.500-2 3.500-2 5 0v11h-5z" fill="#59614f" opacity=".9"/><rect x="46.500" y="10" width="5.500" height="8" fill="#bfc7cf"/><rect x="41" y="18.300" width="4.500" height="2" fill="#e9b863"/><path d="M52 9L70 0h3v22H52z" fill="#3c493d"/><circle cx="58.300" cy="8.600" r="1.300" fill="#eef1e6"/><circle cx="59.700" cy="7" r=".8" fill="#fff"/><circle cx="57.500" cy="9.800" r=".7" fill="#fff"/><rect x="73" y="0" width="3" height="26" fill="#b5a59d"/><ellipse cx="73" cy="19.500" rx="1.300" ry="1.200" fill="#fbe6b8"/><path d="M0 27l16-4h36l24 2v7H0z" fill="#c18a45"/><path d="M17 32l6-8h22l5 8z" fill="#bab6aa"/><path d="M60 29h16v3H58z" fill="#a8783a"/><path d="M1 21c3-1.500 6-1 8 1.500l4 2.500-1 2-8 .5z" fill="#23262c"/><path d="M3 28l-2 3M11 27l2 3" stroke="#4a3524" stroke-width=".6"/><rect x="11.500" y="20" width="2.200" height="2" fill="#2f8a3a"/><path d="M52.600 17c0-.8.600-1.200 1.400-1.200h15.500c.9 0 1.500.5 1.500 1.300V25H52.600z" fill="#b98f1e"/><path d="M40 20.500l12-2.500h14l1.500 7.500H45z" fill="#e3dfd6"/><path d="M53 18.200h11l-.5 3.300h-11z" fill="#f2efe9"/><path d="M45.500 25.300h22v3.600l-20 1z" fill="#b48a1c"/><path d="M35 22.200h10.500v5.600L36 28.600z" fill="#ad851b"/><path d="M35 22.200h10.500v1.300H35z" fill="#c9a02a"/><path d="M37 28.500v1.600M45 27.800v1.700" stroke="#2a2218" stroke-width=".6"/><rect x="68.500" y="25" width="5" height="4.500" fill="#2a2622"/></g></svg></div></div>
<span class="t" style="left:536.87px;top:816px;font-size:14px;line-height:16px;color:#293240;letter-spacing:0.304px;">Standard Rooms</span>
<span class="t" style="left:743.00px;top:816px;font-size:14px;line-height:16px;color:#293240;">5</span>
<span class="t" style="left:886.20px;top:816px;font-size:14px;line-height:16px;color:#293240;">4</span>
<span class="t" style="left:1053.20px;top:816px;font-size:14px;line-height:16px;color:#293240;letter-spacing:.2px;">40</span>
<span class="t" style="left:1261.76px;top:816px;font-size:14px;line-height:16px;color:#293240;letter-spacing:0.198px;">$800.0</span>
<span class="t" style="left:1437.36px;top:816px;font-size:14px;line-height:16px;color:#293240;letter-spacing:0.198px;">$600.0</span>
<div class="abs" style="left:1622px;top:810px;width:62.2px;height:26px;border-radius:4px;background:#0caf60"></div>
<span class="t med2" style="left:1638.60px;top:817px;font-size:10.6px;line-height:12px;color:#fff;letter-spacing:0.238px;">Active</span>
<a class="btn" style="left:1760px;top:808px;width:33px;height:31px;background:#3ec9d6"><svg width="13" height="13" viewBox="0 0 24 24" fill="none" stroke="currentColor" stroke-width="2" stroke-linecap="round" stroke-linejoin="round" style=""><path d="M4 20h4L18.500 9.500a1.500 1.500 0 0 0-4-4L4 16v4"/><path d="M13.500 6.500l4 4"/></svg></a>
<a class="btn" style="left:1801px;top:808px;width:32px;height:31px;background:#ff3a6e"><svg width="13" height="13" viewBox="0 0 24 24" fill="none" stroke="currentColor" stroke-width="2" stroke-linecap="round" stroke-linejoin="round" style=""><path d="M4 7h16M10 11v6M14 11v6"/><path d="M5 7l1 12a2 2 0 0 0 2 2h8a2 2 0 0 0 2-2l1-12"/><path d="M9 7V4a1 1 0 0 1 1-1h4a1 1 0 0 1 1 1v3"/></svg></a>
<span class="t" style="left:309.37px;top:921px;font-size:14px;line-height:16px;color:#293240;letter-spacing:0.310px;">Showing 1 to 5 of 5 entries</span>
<div class="abs" style="left:1747.1px;top:908.9px;width:117.8px;height:38px;border:1px solid #dfe3ea;border-radius:8px;background:#fff;overflow:hidden"></div><div class="abs" style="left:1789.100px;top:908.900px;width:34.900px;height:38px;background:#0caf60"></div>
<svg class="abs" style="left:1765.250px;top:921.600px" width="7" height="12" viewBox="0 0 7 12" fill="none" stroke="#5f6878" stroke-width="1.350"><path d="M5.900 2L1.100 6l4.800 4"/></svg>
<span class="t" style="left:1801.96px;top:919px;font-size:16.5px;line-height:18px;color:#fff;">1</span>
<svg class="abs" style="left:1840.450px;top:921.600px" width="7" height="12" viewBox="0 0 7 12" fill="none" stroke="#5f6878" stroke-width="1.350"><path d="M1.100 2l4.800 4-4.800 4"/></svg>
</main>
</body></html>
